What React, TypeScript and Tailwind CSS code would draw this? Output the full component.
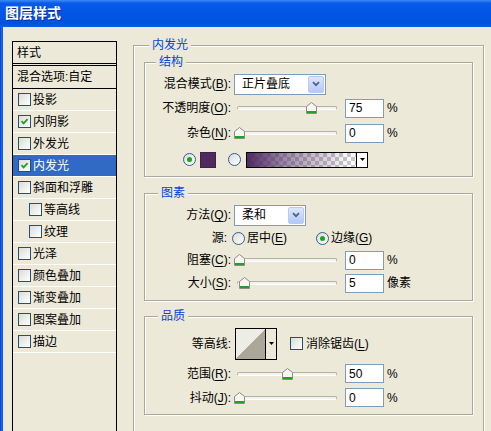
import React from 'react'

const FONT = "font-['Liberation_Sans','Noto_Sans_CJK_SC',sans-serif]"

// underlined mnemonic letter
function U({ c }: { c: string }) {
  return <span className="underline underline-offset-[2px]">{c}</span>
}

function Check({ checked }: { checked?: boolean }) {
  return (
    <span className="flex h-[13px] w-[13px] shrink-0 items-center justify-center border border-[#1C5180] bg-[linear-gradient(135deg,#DCDBD5,#FFFFFF)]">
      {checked && (
        <svg width="9" height="9" viewBox="0 0 9 9">
          <path d="M1.5 4.2 L3.6 6.4 L7.6 2.2" stroke="#21A121" strokeWidth="1.9" fill="none" />
        </svg>
      )}
    </span>
  )
}

function Radio({ checked, className = '' }: { checked?: boolean; className?: string }) {
  return (
    <span className={`flex h-[13px] w-[13px] shrink-0 items-center justify-center rounded-full border border-[#2F5E93] bg-[linear-gradient(135deg,#DCDBD5,#FFFFFF)] ${className}`}>
      {checked && <span className="h-[5px] w-[5px] rounded-full bg-[#21A121]" />}
    </span>
  )
}

function Label({ children, w = 'w-[86px]' }: { children: React.ReactNode; w?: string }) {
  return <span className={`shrink-0 text-right leading-[14px] ${w}`}>{children}</span>
}

function Dropdown({ text, w }: { text: string; w: string }) {
  return (
    <div className={`flex h-[21px] items-center border border-[#7F9DB9] bg-white p-[1px] ${w}`}>
      <span className="flex-1 pl-[6px] leading-[14px]">{text}</span>
      <span className="flex h-full w-[16px] items-center justify-center rounded-[2px] border border-[#B9CBF3] bg-[linear-gradient(to_bottom,#DCE6FD,#B4C9F5)]">
        <svg width="8" height="6" viewBox="0 0 8 6">
          <path d="M1 1.2 L4 4.2 L7 1.2" stroke="#4D6185" strokeWidth="1.8" fill="none" />
        </svg>
      </span>
    </div>
  )
}

function Slider({ frac }: { frac: number }) {
  const left = 1 + frac * 96
  return (
    <div className="relative ml-[2px] flex h-[14px] w-[105px] items-center">
      <div className="ml-[4px] mr-[1px] h-[4px] flex-1 rounded-[2px] border border-[#B5B3A6] border-b-white bg-[#F4F3EE]" />
      <svg className="absolute top-[1px]" style={{ left }} width="11" height="12" viewBox="0 0 11 12">
        <path d="M0.5 11.5 V4.5 L5.5 0.5 L10.5 4.5 V11.5 Z" fill="#F7F7F4" stroke="#8C8C80" />
        <path d="M1 10 H10" stroke="#21A121" strokeWidth="2" />
      </svg>
    </div>
  )
}

function Field({ value }: { value: string }) {
  return (
    <div className="ml-[7px] flex h-[19px] w-[39px] items-center border border-[#7F9DB9] bg-white pl-[3px] leading-[14px]">
      {value}
    </div>
  )
}

function Group({ title, lg, className = '', children }: { title: string; lg: string; className?: string; children?: React.ReactNode }) {
  return (
    <div className={`border border-[#ACA899] shadow-[inset_1px_1px_0_#fff,1px_1px_0_#fff] ${className}`}>
      <div className={`-mt-[8px] w-fit bg-[#ECE9D8] px-[3px] leading-[14px] text-[#0046D5] ${lg}`}>{title}</div>
      {children}
    </div>
  )
}

const items: { name: string; checked?: boolean; sel?: boolean; sub?: boolean }[] = [
  { name: '投影' },
  { name: '内阴影', checked: true },
  { name: '外发光' },
  { name: '内发光', checked: true, sel: true },
  { name: '斜面和浮雕' },
  { name: '等高线', sub: true },
  { name: '纹理', sub: true },
  { name: '光泽' },
  { name: '颜色叠加' },
  { name: '渐变叠加' },
  { name: '图案叠加' },
  { name: '描边' },
]

export default function App() {
  return (
    <div className={`h-[431px] w-[491px] overflow-hidden bg-[#ECE9D8] text-[12px] text-black ${FONT}`}>
      {/* title bar */}
      <div className="h-[27px] bg-[linear-gradient(to_bottom,#3D8BF5_0%,#0A5AE8_12%,#0055E5_50%,#0052DD_88%,#0A5DE8_100%)] pl-[5px] text-[14px] font-bold leading-[27px] text-white [text-shadow:1px_1px_0_#0A2A9A]">
        图层样式
      </div>

      <div className="flex">
        <div className="h-[404px] w-[3px] shrink-0 bg-[linear-gradient(to_right,#0831D9,#166AEE,#0855DD)]" />

        {/* style list */}
        <div className="ml-[9px] mt-[14px] h-[400px] w-[105px] shrink-0 border border-black">
          <div className="flex h-[22px] items-center border-b border-black pl-[4px] leading-[14px]">样式</div>
          <div className="mt-[1px] flex h-[24px] items-center border-y border-black pl-[4px] leading-[14px]">混合选项:自定</div>
          {items.map(it => (
            <div
              key={it.name}
              className={`flex h-[22px] items-center gap-[2px] border-b border-white leading-[14px] ${it.sub ? 'pl-[16px]' : 'pl-[5px]'} ${it.sel ? 'bg-[#316AC5] text-white' : ''}`}
            >
              <Check checked={it.checked} />
              <span>{it.name}</span>
            </div>
          ))}
        </div>

        {/* right side */}
        <div className="ml-[16px] mt-[18px] h-[420px] w-[351px] shrink-0 border border-[#ACA899] px-[10px] shadow-[inset_1px_1px_0_#fff,1px_1px_0_#fff]">
          <div className="-mt-[8px] ml-[5px] w-fit bg-[#ECE9D8] px-[3px] leading-[14px] text-[#0046D5]">内发光</div>

          <Group title="结构" lg="ml-[11px]" className="mt-[10px] pb-[2px]">
            <div className="mt-[4px] flex h-[22px] items-center">
              <Label>混合模式(<U c="B" />):</Label>
              <Dropdown text="正片叠底" w="ml-[3px] w-[92px]" />
            </div>
            <div className="flex h-[26px] items-center">
              <Label>不透明度(<U c="O" />):</Label>
              <Slider frac={0.75} />
              <Field value="75" />
              <span className="ml-[3px]">%</span>
            </div>
            <div className="flex h-[24px] items-center">
              <Label>杂色(<U c="N" />):</Label>
              <Slider frac={0} />
              <Field value="0" />
              <span className="ml-[3px]">%</span>
            </div>
            <div className="flex h-[29px] items-center pl-[38px]">
              <Radio checked />
              <span className="ml-[4px] h-[16px] w-[16px] border border-[#3A2346] bg-[#50295F]" />
              <Radio className="ml-[12px]" />
              <div className="ml-[5px] flex h-[16px] w-[122px] border border-black">
                <div className="flex-1 bg-[repeating-conic-gradient(#C8C8C8_0_25%,#FFFFFF_0_50%)] bg-[length:8px_8px]">
                  <div className="h-full w-full bg-[linear-gradient(to_right,#4F2A63,rgba(79,42,99,0.55)_35%,rgba(79,42,99,0)_95%)]" />
                </div>
                <div className="flex w-[11px] items-center justify-center border-l border-black bg-white">
                  <svg width="5" height="3" viewBox="0 0 5 3"><path d="M0 0 H5 L2.5 3 Z" fill="#000" /></svg>
                </div>
              </div>
            </div>
          </Group>

          <Group title="图素" lg="ml-[13px]" className="mt-[16px] pb-[4px]">
            <div className="mt-[4px] flex h-[22px] items-center">
              <Label>方法(<U c="Q" />):</Label>
              <Dropdown text="柔和" w="ml-[3px] w-[72px]" />
            </div>
            <div className="flex h-[24px] items-center">
              <Label w="w-[82px]">源:</Label>
              <Radio className="ml-[5px]" />
              <span className="ml-[2px] w-[69px] leading-[14px]">居中(<U c="E" />)</span>
              <Radio checked />
              <span className="ml-[2px] leading-[14px]">边缘(<U c="G" />)</span>
            </div>
            <div className="flex h-[20px] items-center">
              <Label>阻塞(<U c="C" />):</Label>
              <Slider frac={0} />
              <Field value="0" />
              <span className="ml-[3px]">%</span>
            </div>
            <div className="flex h-[26px] items-center">
              <Label>大小(<U c="S" />):</Label>
              <Slider frac={0.05} />
              <Field value="5" />
              <span className="ml-[3px]">像素</span>
            </div>
          </Group>

          <Group title="品质" lg="ml-[13px]" className="mt-[15px] pb-[6px]">
            <div className="mt-[4px] flex h-[33px] items-center">
              <Label>等高线:</Label>
              <div className="ml-[4px] flex h-[32px] w-[42px] border border-black">
                <div className="flex-1 bg-[linear-gradient(to_top_left,#ACA899_50%,#EEEDE5_50%)]" />
                <div className="flex w-[11px] items-center justify-center border-l border-black bg-[#ECE9D8]">
                  <svg width="5" height="3" viewBox="0 0 5 3"><path d="M0 0 H5 L2.5 3 Z" fill="#000" /></svg>
                </div>
              </div>
              <span className="ml-[13px]"><Check /></span>
              <span className="ml-[3px] leading-[14px]">消除锯齿(<U c="L" />)</span>
            </div>
            <div className="flex h-[27px] items-center">
              <Label>范围(<U c="R" />):</Label>
              <Slider frac={0.5} />
              <Field value="50" />
              <span className="ml-[3px]">%</span>
            </div>
            <div className="flex h-[21px] items-center">
              <Label>抖动(<U c="J" />):</Label>
              <Slider frac={0} />
              <Field value="0" />
              <span className="ml-[3px]">%</span>
            </div>
          </Group>
        </div>
      </div>
    </div>
  )
}
